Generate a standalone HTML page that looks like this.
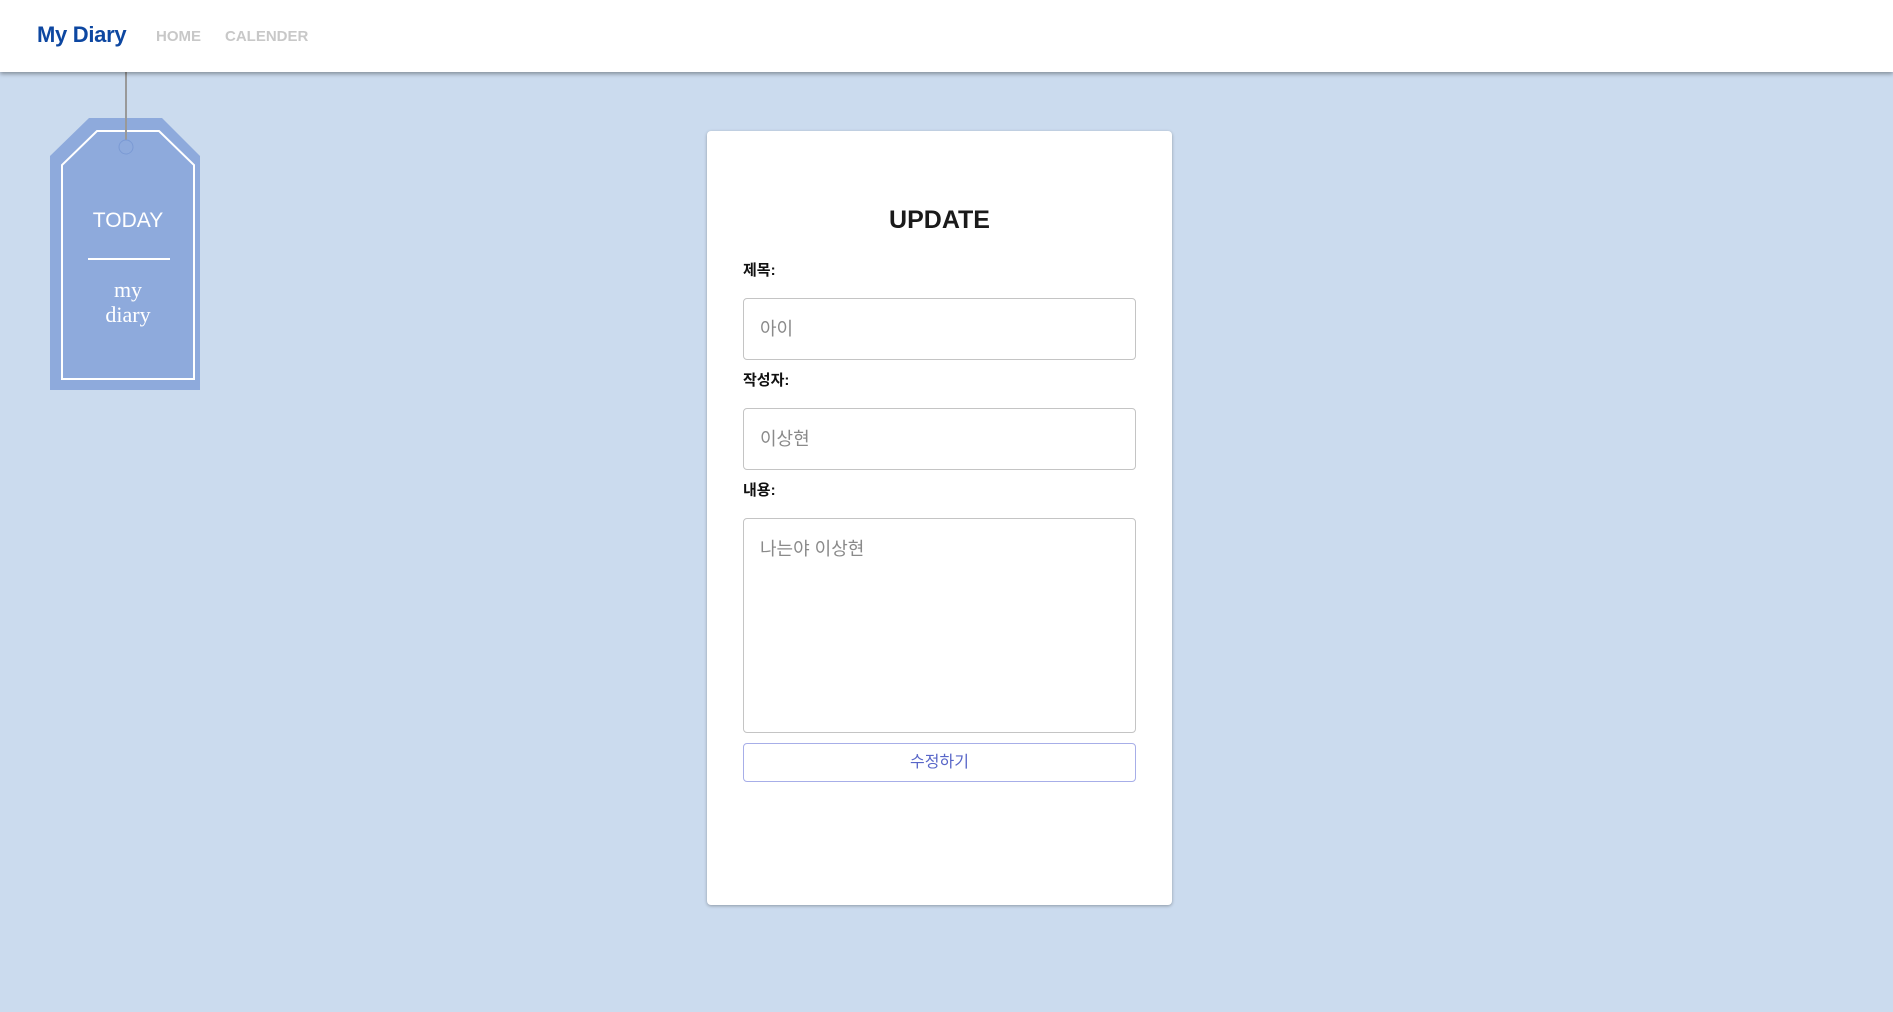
<!DOCTYPE html>
<html><head><meta charset="utf-8"><style>
*{box-sizing:border-box;margin:0;padding:0}
body{width:1893px;height:1012px;background:#cbdbee;font-family:"Liberation Sans","Noto Sans CJK KR",sans-serif;position:relative;overflow:hidden}
.hdr{position:absolute;left:0;top:0;width:1893px;height:72px;background:#fff;box-shadow:0 2px 4px rgba(0,0,0,.35);z-index:2}
.logo{position:absolute;left:37px;top:22px;font-size:22px;color:#0d47a1;font-weight:bold;letter-spacing:-0.3px}
.nav{position:absolute;top:28px;font-size:15px;font-weight:bold;color:#c8c8c8}
.card{position:absolute;left:707px;top:131px;width:465px;height:774px;background:#fff;border-radius:4px;box-shadow:0 1px 3px rgba(0,0,0,.3)}
h1{position:absolute;left:0;width:100%;top:206px;text-align:center;font-size:25px;color:#1a1a1a}
.lbl{position:absolute;left:743px;font-size:15px;font-weight:bold;color:#111}
.inp{position:absolute;left:743px;width:393px;border:1px solid #c4c4c4;border-radius:4px;background:#fff;color:#8a8a8a;font-size:18px;padding-left:16px}
.btn{position:absolute;left:743px;top:743px;width:393px;height:39px;border:1px solid #a7aee8;border-radius:4px;color:#5866c8;font-size:16px;text-align:center;line-height:37px}
</style></head><body>
<div class="hdr">
<div class="logo">My Diary</div>
<div class="nav" style="left:156px">HOME</div>
<div class="nav" style="left:225px">CALENDER</div>
</div>
<svg style="position:absolute;left:0;top:0" width="260" height="400">
<polygon points="89,118 162,118 200,156 200,390 50,390 50,156" fill="#8eaadc"/>
<polygon points="97,131 159,131 194,165 194,379 62,379 62,165" fill="none" stroke="#fff" stroke-width="2"/>
<line x1="126" y1="72" x2="126" y2="140" stroke="#999" stroke-width="2"/>
<circle cx="126" cy="147" r="7" fill="#8eaadc" stroke="#7b9ad4" stroke-width="1"/>
<text x="128" y="227" text-anchor="middle" font-family="Liberation Sans" font-size="21" fill="#fff">TODAY</text>
<line x1="88" y1="259" x2="170" y2="259" stroke="#fff" stroke-width="2"/>
<text x="128" y="297" text-anchor="middle" font-family="Liberation Serif" font-size="22" fill="#fff">my</text>
<text x="128" y="322" text-anchor="middle" font-family="Liberation Serif" font-size="22" fill="#fff">diary</text>
</svg>
<div class="card"></div>
<h1 style="left:707px;width:465px">UPDATE</h1>
<div class="lbl" style="top:259px">제목:</div>
<div class="inp" style="top:298px;height:62px;line-height:60px">아이</div>
<div class="lbl" style="top:369px">작성자:</div>
<div class="inp" style="top:408px;height:62px;line-height:60px">이상현</div>
<div class="lbl" style="top:479px">내용:</div>
<div class="inp" style="top:518px;height:215px;padding-top:16px">나는야 이상현</div>
<div class="btn">수정하기</div>
</body></html>
